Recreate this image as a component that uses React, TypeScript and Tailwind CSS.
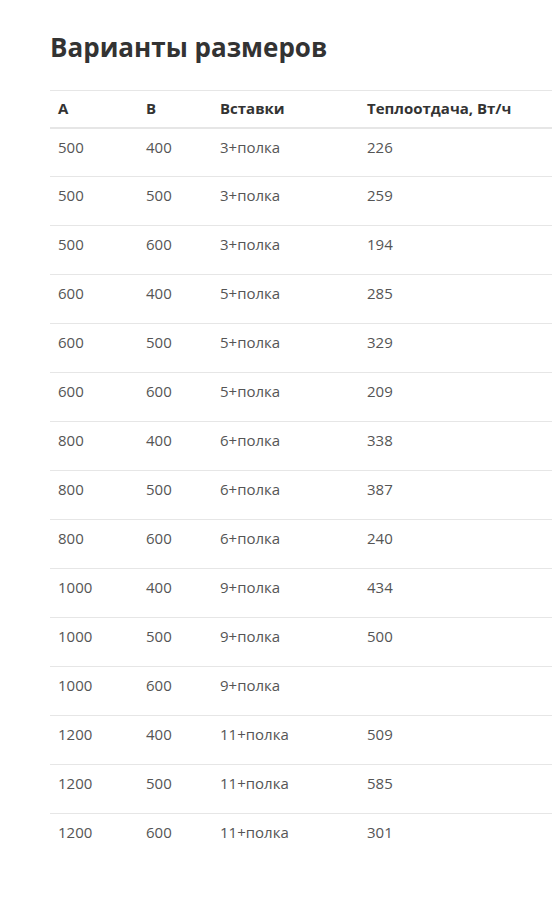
import React from 'react';

const rows: [string, string, string, string][] = [
  ['500', '400', '3+полка', '226'],
  ['500', '500', '3+полка', '259'],
  ['500', '600', '3+полка', '194'],
  ['600', '400', '5+полка', '285'],
  ['600', '500', '5+полка', '329'],
  ['600', '600', '5+полка', '209'],
  ['800', '400', '6+полка', '338'],
  ['800', '500', '6+полка', '387'],
  ['800', '600', '6+полка', '240'],
  ['1000', '400', '9+полка', '434'],
  ['1000', '500', '9+полка', '500'],
  ['1000', '600', '9+полка', ''],
  ['1200', '400', '11+полка', '509'],
  ['1200', '500', '11+полка', '585'],
  ['1200', '600', '11+полка', '301'],
];

export default function App() {
  return (
    <div className="min-h-[900px] w-[552px] overflow-hidden bg-white pl-[50px] pt-[29px] font-['Open_Sans',sans-serif]">
      <h2 className="text-[26px] font-bold leading-[36px] text-[#333]">Варианты размеров</h2>

      <table className="mt-[25px] w-[560px] table-fixed border-collapse text-[15px]">
        <colgroup>
          <col className="w-[96px]" />
          <col className="w-[74px]" />
          <col className="w-[147px]" />
          <col />
        </colgroup>
        <thead>
          <tr className="border-t border-b-2 border-[#e6e6e6]">
            <th className="h-[37px] pl-[8px] text-left font-bold leading-[21px] text-[#333]">A</th>
            <th className="text-left font-bold leading-[21px] text-[#333]">B</th>
            <th className="text-left font-bold leading-[21px] text-[#333]">Вставки</th>
            <th className="text-left font-bold leading-[21px] text-[#333]">Теплоотдача, Вт/ч</th>
          </tr>
        </thead>
        <tbody>
          {rows.map((r, i) => (
            <tr key={i} className={i < rows.length - 1 ? 'border-b border-[#e6e6e6]' : ''}>
              <td className="h-[49px] pl-[8px] pt-[8px] align-top leading-[21px] text-[#555]">{r[0]}</td>
              <td className="pt-[8px] align-top leading-[21px] text-[#555]">{r[1]}</td>
              <td className="pt-[8px] align-top leading-[21px] text-[#555]">{r[2]}</td>
              <td className="pt-[8px] align-top leading-[21px] text-[#555]">{r[3]}</td>
            </tr>
          ))}
        </tbody>
      </table>
    </div>
  );
}
